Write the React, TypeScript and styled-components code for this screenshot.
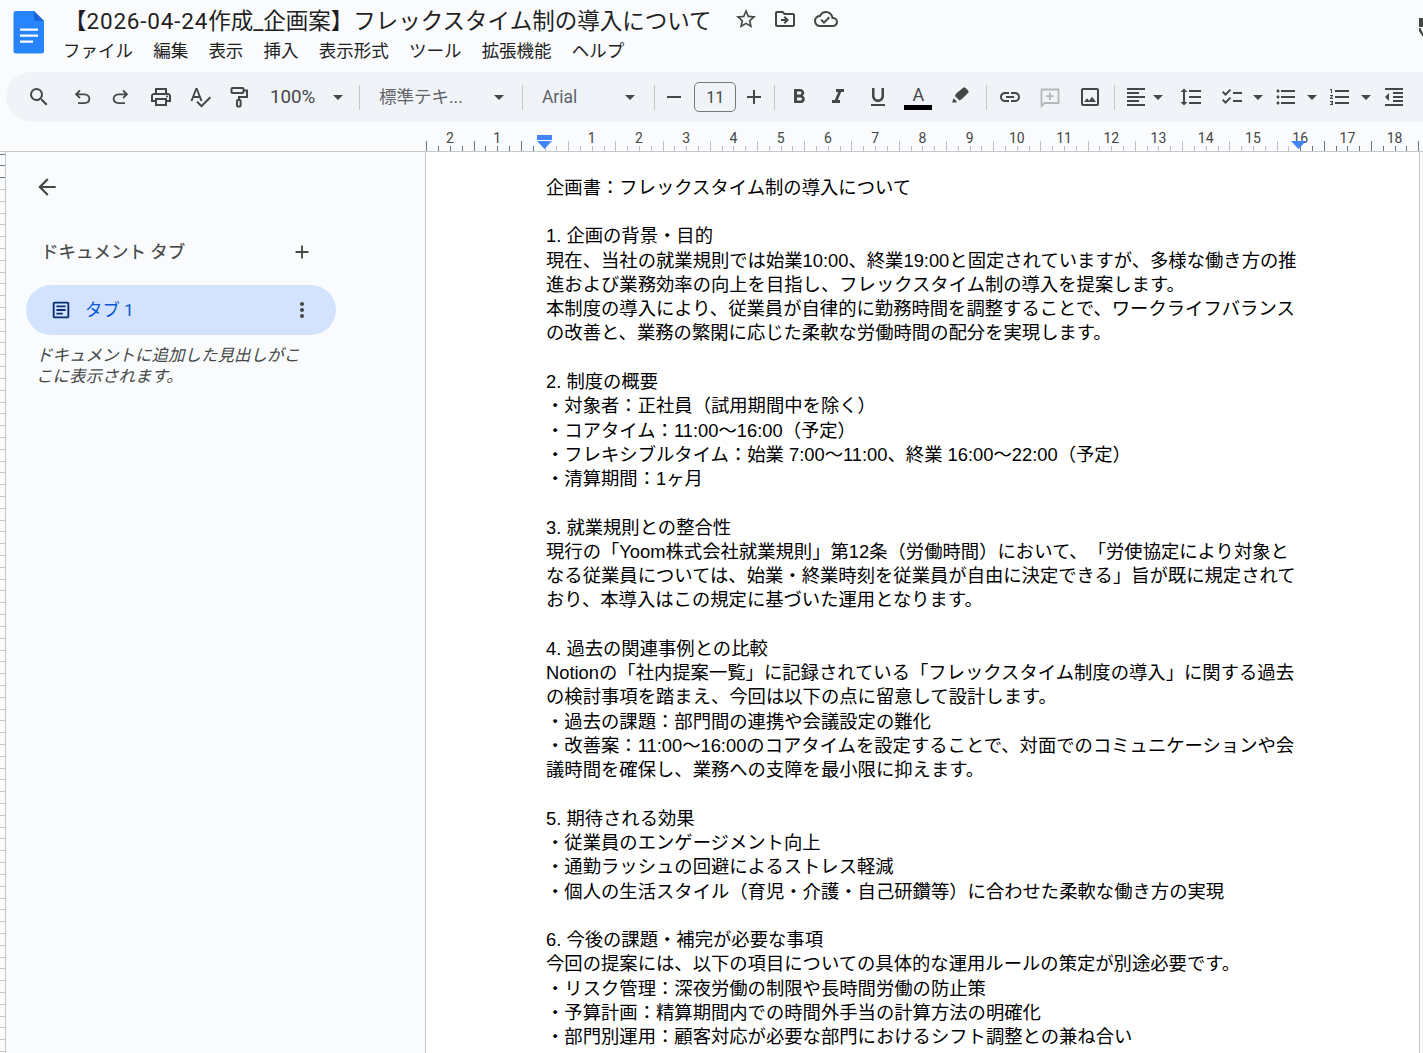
import React from "react"
import styled, { createGlobalStyle } from "styled-components"
import {
  MdAdd,
  MdArrowBack,
  MdArrowDropDown,
  MdChecklist,
  MdFormatAlignLeft,
  MdFormatBold,
  MdFormatIndentDecrease,
  MdFormatItalic,
  MdFormatLineSpacing,
  MdFormatListBulleted,
  MdFormatListNumbered,
  MdFormatUnderlined,
  MdLink,
  MdMoreVert,
  MdOutlineArticle,
  MdOutlineCloudDone,
  MdOutlineDriveFileMove,
  MdOutlineImage,
  MdOutlinePrint,
  MdRemove,
  MdSearch,
  MdSpellcheck,
  MdStarBorder,
} from "react-icons/md"

const GlobalStyle = createGlobalStyle`
  html, body {
    margin: 0;
    padding: 0;
    overflow: hidden;
    background: #f9fbfd;
  }
`

const uiFont = `Roboto, "Noto Sans CJK JP", sans-serif`

const Page = styled.div`
  width: 1423px;
  height: 1053px;
  overflow: hidden;
  display: flex;
  flex-direction: column;
  background: #f9fbfd;
  font-family: ${uiFont};
  color: #444746;
  text-spacing-trim: space-all;
`

const Header = styled.header`
  height: 72px;
  display: flex;
  flex-shrink: 0;
  position: relative;
`

const Logo = styled.svg`
  width: 32px;
  height: 44px;
  margin: 10px 0 0 13px;
  flex-shrink: 0;
`

const HeaderText = styled.div`
  margin-left: 19px;
  display: flex;
  flex-direction: column;
`

const TitleRow = styled.div`
  height: 36px;
  display: flex;
  align-items: center;
  padding-top: 2px;
  box-sizing: border-box;
`

const Title = styled.div`
  font-size: 22.5px;
  color: #1f1f1f;
  white-space: nowrap;
  width: 670px;
`

const TitleNum = styled.span`
  letter-spacing: 0.8px;
`

const TitleIcon = styled.span<{ $ml?: number }>`
  display: flex;
  margin-left: ${(p) => p.$ml ?? 0}px;
  color: #444746;
  font-size: 24px;
`

const Menu = styled.nav`
  display: flex;
  height: 26px;
  align-items: center;
  gap: 20.2px;
  font-size: 17.5px;
  color: #1f1f1f;
  white-space: nowrap;
  margin-left: -1px;
`

const ClippedIcon = styled.svg`
  position: absolute;
  left: 1419px;
  top: 18px;
  width: 4px;
  height: 19px;
  color: #444746;
`

const Toolbar = styled.div`
  height: 50px;
  width: 1460px;
  margin-left: 6px;
  padding-left: 13.5px;
  box-sizing: border-box;
  border-radius: 25px;
  background: #f0f4f9;
  display: flex;
  align-items: center;
  flex-shrink: 0;
`

const Btn = styled.span<{ $w?: number; $ml?: number; $faded?: boolean }>`
  width: ${(p) => p.$w ?? 39.4}px;
  margin-left: ${(p) => p.$ml ?? 0}px;
  flex-shrink: 0;
  display: flex;
  align-items: center;
  justify-content: center;
  font-size: 24px;
  color: ${(p) => (p.$faded ? "#b4b7ba" : "#444746")};
`

const Caret = styled.span<{ $ml?: number }>`
  width: 24px;
  margin-left: ${(p) => p.$ml ?? 0}px;
  flex-shrink: 0;
  display: flex;
  font-size: 24px;
  color: #444746;
`

const Sep = styled.span<{ $ml?: number }>`
  width: 1px;
  height: 25px;
  margin-left: ${(p) => p.$ml ?? 0}px;
  flex-shrink: 0;
  background: #c7c7c7;
`

const Label = styled.span<{ $w: number; $ml?: number }>`
  width: ${(p) => p.$w}px;
  margin-left: ${(p) => p.$ml ?? 0}px;
  flex-shrink: 0;
  font-size: 17.5px;
  color: #5f6368;
  white-space: nowrap;
`

const StyleLabel = styled(Label)`
  padding-bottom: 3px;
`

const ZoomLabel = styled(Label)`
  color: #444746;
  font-size: 18.8px;
`

const SizeBox = styled.span`
  width: 42px;
  height: 30px;
  margin-left: 1px;
  flex-shrink: 0;
  box-sizing: border-box;
  border: 1px solid #747775;
  border-radius: 5px;
  display: flex;
  align-items: center;
  justify-content: center;
  font-size: 16px;
  color: #444746;
`

const TextColor = styled.span`
  display: flex;
  flex-direction: column;
  align-items: center;
  width: 28px;
  font-size: 18px;
  line-height: 20px;
  color: #444746;
  margin: 1px 0 0 2px;

  &::after {
    content: "";
    display: block;
    width: 28px;
    height: 5px;
    background: #000;
  }
`

const Ruler = styled.svg`
  display: block;
  width: 1423px;
  height: 30px;
  flex-shrink: 0;
`

const Workspace = styled.div`
  flex: 1;
  display: flex;
  min-height: 0;
`

const SideRuler = styled.svg`
  width: 6px;
  height: 901px;
  flex-shrink: 0;
`

const Sidebar = styled.aside`
  width: 420px;
  flex-shrink: 0;
  box-sizing: border-box;
  border-right: 1px solid #c7c7c7;
  padding: 0 0 0 20px;
`

const BackRow = styled.div`
  height: 70px;
  padding-left: 8px;
  display: flex;
  align-items: center;
  font-size: 26px;
  color: #444746;
`

const TabsHead = styled.div`
  width: 275px;
  margin: 15px 0 0 15px;
  height: 30px;
  display: flex;
  align-items: center;
  justify-content: space-between;
  font-size: 17.5px;
  color: #444746;
`

const HeadText = styled.span`
  padding-bottom: 3px;
  -webkit-text-stroke: 0.2px #444746;
`

const HeadAdd = styled.span`
  display: flex;
  font-size: 22px;
  margin-right: 3px;
`

const TabPill = styled.div`
  width: 310px;
  height: 50px;
  margin-top: 18px;
  box-sizing: border-box;
  padding: 0 22px 0 24px;
  border-radius: 25px;
  background: #d3e3fd;
  display: flex;
  align-items: center;
  font-size: 17.4px;
  color: #0b57d0;
`

const TabIcon = styled.span`
  display: flex;
  font-size: 22px;
  color: #062e6f;
`

const TabName = styled.span`
  margin-left: 13px;
  flex: 1;
  padding-bottom: 3px;
`

const TabMore = styled.span`
  display: flex;
  font-size: 24px;
  color: #444746;
`

const Hint = styled.p`
  width: 268px;
  margin: 10px 0 0 10px;
  font-size: 16.5px;
  line-height: 21px;
  font-style: italic;
  color: #444746;
`

const Doc = styled.main`
  flex: 1;
  margin-right: 3px;
  background: #fff;
  border-right: 1px solid #c7c7c7;
  padding: 23.85px 0 0 120px;
  box-sizing: border-box;
  overflow: hidden;
  font-family: "Liberation Sans", "Noto Sans CJK JP", sans-serif;
  font-size: 18.34px;
  color: #000;
`

const Line = styled.div`
  height: 24.27px;
  line-height: 24.27px;
  white-space: nowrap;
`

const menuItems = ["ファイル", "編集", "表示", "挿入", "表示形式", "ツール", "拡張機能", "ヘルプ"]

const docLines = [
  "企画書：フレックスタイム制の導入について",
  "",
  "1. 企画の背景・目的",
  "現在、当社の就業規則では始業10:00、終業19:00と固定されていますが、多様な働き方の推",
  "進および業務効率の向上を目指し、フレックスタイム制の導入を提案します。",
  "本制度の導入により、従業員が自律的に勤務時間を調整することで、ワークライフバランス",
  "の改善と、業務の繁閑に応じた柔軟な労働時間の配分を実現します。",
  "",
  "2. 制度の概要",
  "・対象者：正社員（試用期間中を除く）",
  "・コアタイム：11:00〜16:00（予定）",
  "・フレキシブルタイム：始業 7:00〜11:00、終業 16:00〜22:00（予定）",
  "・清算期間：1ヶ月",
  "",
  "3. 就業規則との整合性",
  "現行の「Yoom株式会社就業規則」第12条（労働時間）において、「労使協定により対象と",
  "なる従業員については、始業・終業時刻を従業員が自由に決定できる」旨が既に規定されて",
  "おり、本導入はこの規定に基づいた運用となります。",
  "",
  "4. 過去の関連事例との比較",
  "Notionの「社内提案一覧」に記録されている「フレックスタイム制度の導入」に関する過去",
  "の検討事項を踏まえ、今回は以下の点に留意して設計します。",
  "・過去の課題：部門間の連携や会議設定の難化",
  "・改善案：11:00〜16:00のコアタイムを設定することで、対面でのコミュニケーションや会",
  "議時間を確保し、業務への支障を最小限に抑えます。",
  "",
  "5. 期待される効果",
  "・従業員のエンゲージメント向上",
  "・通勤ラッシュの回避によるストレス軽減",
  "・個人の生活スタイル（育児・介護・自己研鑽等）に合わせた柔軟な働き方の実現",
  "",
  "6. 今後の課題・補完が必要な事項",
  "今回の提案には、以下の項目についての具体的な運用ルールの策定が別途必要です。",
  "・リスク管理：深夜労働の制限や長時間労働の防止策",
  "・予算計画：精算期間内での時間外手当の計算方法の明確化",
  "・部門別運用：顧客対応が必要な部門におけるシフト調整との兼ね合い",
]

// ruler: 0 at x=544.5, 47.23px per cm
const ZERO = 544.5
const CM = 47.23
const ticks: { x: number; long: boolean; dark: boolean }[] = []
for (let i = -11; i <= 78; i++) {
  const x = Math.round(ZERO + (i * CM) / 4) + 0.5
  if (x < 426) continue
  ticks.push({ x, long: Math.abs(i % 4) === 2, dark: x < 544 || x > 1298 })
}
const rulerLabels: { n: number; x: number }[] = [
  { n: 2, x: ZERO - 2 * CM },
  { n: 1, x: ZERO - CM },
]
for (let n = 1; n <= 18; n++) rulerLabels.push({ n, x: ZERO + n * CM })

const sideTicks: number[] = []
for (let i = 0; i < 77; i++) sideTicks.push(Math.round(1.5 + i * 11.81))

const UndoIcon = ({ flip }: { flip?: boolean }) => (
  <svg width="24" height="24" viewBox="0 0 24 24" fill="currentColor" style={flip ? { transform: "scaleX(-1)" } : undefined}>
    <path d="M8 19v-1.8h6.6q1.6 0 2.75-1t1.15-2.5q0-1.5-1.15-2.5t-2.75-1H8.3l2.3 2.3-1.3 1.3L4.8 9.3l4.5-4.5 1.3 1.3-2.3 2.3h6.3q2.35 0 4.02 1.55 1.68 1.55 1.68 3.95t-1.68 3.95Q16.95 19 14.6 19z" />
  </svg>
)

const RollerIcon = () => (
  <svg width="24" height="24" viewBox="0 0 24 24" fill="none" stroke="currentColor" strokeWidth="2">
    <rect x="3.500" y="3" width="12" height="5" rx="1" />
    <path d="M15.500 5.500H19V12h-8V15" />
    <rect x="9" y="15" width="3.600" height="6.500" rx="1" />
  </svg>
)

const MarkerIcon = () => (
  <svg width="21" height="21" viewBox="0 0 24 24" fill="currentColor" style={{ marginBottom: 4 }}>
    <path d="M15.200 3.200a1.600 1.600 0 0 1 2.300 0l3.300 3.300a1.600 1.600 0 0 1 0 2.300l-7.700 7.700-1.200.3-1 1-5.500-5.500 1-1 .3-1.200z" />
    <path d="M4 15l4 4-1.200 1H2.500z" />
  </svg>
)

const CommentIcon = () => (
  <svg width="24" height="24" viewBox="0 0 24 24" fill="none" stroke="currentColor" strokeWidth="1.800">
    <path d="M3.500 4.500h17v13.500H6.500l-3 3z" />
    <path d="M12 7.500v7.500M8.300 11.200h7.400" />
  </svg>
)

const App = () => (
  <Page>
    <GlobalStyle />
    <Header>
      <Logo viewBox="0 0 32 44">
        <path d="M3 1h18l10 10v30a2.500 2.500 0 0 1-2.500 2.500H3A2.500 2.500 0 0 1 .5 41V3.500A2.500 2.500 0 0 1 3 1z" fill="#2684fc" />
        <path d="M21 1l10 10h-7.500A2.500 2.500 0 0 1 21 8.500z" fill="#1a63d8" />
        <path d="M7 18.500h18v2.200H7zM7 24.500h18v2.200H7zM7 30.500h13v2.200H7z" fill="#fff" />
      </Logo>
      <HeaderText>
        <TitleRow>
          <Title>【<TitleNum>2026-04-24</TitleNum>作成_企画案】フレックスタイム制の導入について</Title>
          <TitleIcon><MdStarBorder /></TitleIcon>
          <TitleIcon $ml={15}><MdOutlineDriveFileMove /></TitleIcon>
          <TitleIcon $ml={17}><MdOutlineCloudDone /></TitleIcon>
        </TitleRow>
        <Menu>
          {menuItems.map((m) => (
            <span key={m}>{m}</span>
          ))}
        </Menu>
      </HeaderText>
      <ClippedIcon viewBox="0 0 4 19" fill="currentColor">
        <path d="M0 0h4v9H0zM0 10h1.500L4 15.500V19L0 13z" />
      </ClippedIcon>
    </Header>

    <Toolbar>
      <Btn><MdSearch /></Btn>
      <Btn $ml={3.4}><UndoIcon /></Btn>
      <Btn><UndoIcon flip /></Btn>
      <Btn><MdOutlinePrint /></Btn>
      <Btn><MdSpellcheck /></Btn>
      <Btn><RollerIcon /></Btn>
      <ZoomLabel $w={46} $ml={10.7}>100%</ZoomLabel>
      <Caret $ml={10}><MdArrowDropDown /></Caret>
      <Sep $ml={9} />
      <StyleLabel $w={83} $ml={19}>標準テキ...</StyleLabel>
      <Caret $ml={25}><MdArrowDropDown /></Caret>
      <Sep $ml={11} />
      <Label $w={37} $ml={19}>Arial</Label>
      <Caret $ml={39}><MdArrowDropDown /></Caret>
      <Sep $ml={12} />
      <Btn $ml={-1}><MdRemove /></Btn>
      <SizeBox>11</SizeBox>
      <Btn $ml={-2}><MdAdd /></Btn>
      <Sep />
      <Btn $ml={4.3}><MdFormatBold /></Btn>
      <Btn $ml={0.3}><MdFormatItalic /></Btn>
      <Btn $ml={0.2}><MdFormatUnderlined /></Btn>
      <Btn><TextColor>A</TextColor></Btn>
      <Btn $ml={4}><MarkerIcon /></Btn>
      <Sep $ml={5.3} />
      <Btn $ml={3.3}><MdLink /></Btn>
      <Btn $ml={0.6} $faded><CommentIcon /></Btn>
      <Btn $ml={0.6}><MdOutlineImage /></Btn>
      <Sep $ml={4.8} />
      <Btn $w={24} $ml={9}><MdFormatAlignLeft /></Btn>
      <Caret $ml={-2}><MdArrowDropDown /></Caret>
      <Btn $ml={1}><MdFormatLineSpacing /></Btn>
      <Btn $w={24} $ml={9.3}><MdChecklist /></Btn>
      <Caret $ml={2}><MdArrowDropDown /></Caret>
      <Btn $w={24} $ml={4}><MdFormatListBulleted /></Btn>
      <Caret $ml={2}><MdArrowDropDown /></Caret>
      <Btn $w={24} $ml={4}><MdFormatListNumbered /></Btn>
      <Caret $ml={2}><MdArrowDropDown /></Caret>
      <Btn $w={24} $ml={4}><MdFormatIndentDecrease /></Btn>
    </Toolbar>

    <Ruler viewBox="0 0 1423 30">
      {ticks.map((t) => (
        <line key={t.x} x1={t.x} x2={t.x} y1={t.long ? 19 : 24} y2={29} stroke={t.dark ? "#70757a" : "#bdc1c6"} strokeWidth="1" />
      ))}
      {rulerLabels.map((l) => (
        <text key={l.x} x={l.x} y={21} textAnchor="middle" fontFamily="Roboto, sans-serif" fontSize="14" fill="#444746">
          {l.n}
        </text>
      ))}
      <line x1="0" x2="1423" y1="29.500" y2="29.500" stroke="#c7c7c7" strokeWidth="1" />
      <path d="M537 13h15v5h-15zM537 19h15l-7.500 8z" fill="#4285f4" />
      <path d="M1291 19h15l-7.500 8z" fill="#4285f4" />
    </Ruler>

    <Workspace>
      <SideRuler viewBox="0 0 6 901">
        {sideTicks.map((y, i) => (
          <line key={y} x1="0" x2="5" y1={y + 0.5} y2={y + 0.5} stroke={i < 3 ? "#70757a" : "#c7c7c7"} strokeWidth="1" />
        ))}
        <line x1="5.500" x2="5.500" y1="0" y2="901" stroke="#c7c7c7" strokeWidth="1" />
      </SideRuler>
      <Sidebar>
        <BackRow><MdArrowBack /></BackRow>
        <TabsHead>
          <HeadText>ドキュメント タブ</HeadText>
          <HeadAdd><MdAdd /></HeadAdd>
        </TabsHead>
        <TabPill>
          <TabIcon><MdOutlineArticle /></TabIcon>
          <TabName>タブ 1</TabName>
          <TabMore><MdMoreVert /></TabMore>
        </TabPill>
        <Hint>ドキュメントに追加した見出しがここに表示されます。</Hint>
      </Sidebar>
      <Doc>
        {docLines.map((l, i) => (
          <Line key={i}>{l || "\u00a0"}</Line>
        ))}
      </Doc>
    </Workspace>
  </Page>
)

export default App
